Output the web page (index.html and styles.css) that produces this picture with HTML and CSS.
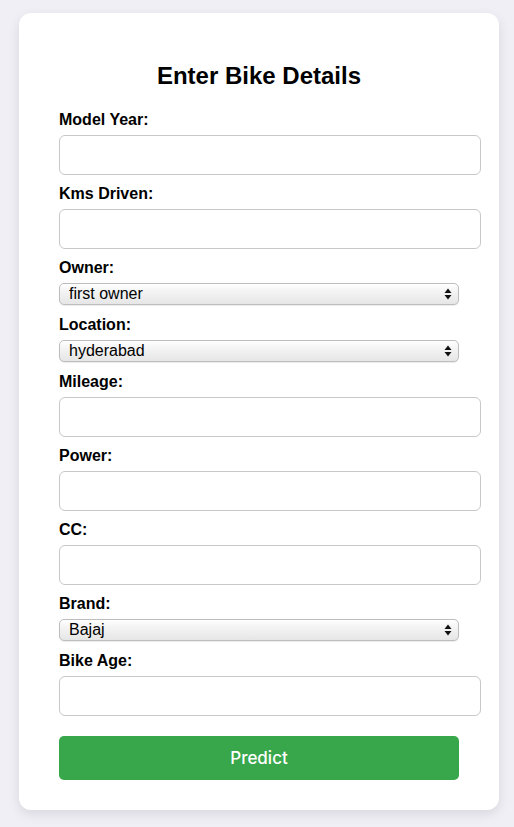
FILE: index.html
```html
<!DOCTYPE html>
<html>
<head>
<meta charset="utf-8">
<title>Bike Price Prediction</title>
<link rel="stylesheet" href="styles.css">
</head>
<body>
<div class="card">
  <h2 class="title">Enter Bike Details</h2>
  <form class="form">
    <label class="label">Model Year:</label>
    <input class="field" type="text">
    <label class="label">Kms Driven:</label>
    <input class="field" type="text">
    <label class="label">Owner:</label>
    <div class="select-wrap">
      <select class="select"><option>first owner</option></select>
      <svg class="arrows" width="8" height="12" viewBox="0 0 8 12"><path d="M4 0.5 L7.5 5 L0.5 5 Z M4 11.5 L7.5 7 L0.5 7 Z" fill="#111"/></svg>
    </div>
    <label class="label">Location:</label>
    <div class="select-wrap">
      <select class="select"><option>hyderabad</option></select>
      <svg class="arrows" width="8" height="12" viewBox="0 0 8 12"><path d="M4 0.5 L7.5 5 L0.5 5 Z M4 11.5 L7.5 7 L0.5 7 Z" fill="#111"/></svg>
    </div>
    <label class="label">Mileage:</label>
    <input class="field" type="text">
    <label class="label">Power:</label>
    <input class="field" type="text">
    <label class="label">CC:</label>
    <input class="field" type="text">
    <label class="label">Brand:</label>
    <div class="select-wrap">
      <select class="select"><option>Bajaj</option></select>
      <svg class="arrows" width="8" height="12" viewBox="0 0 8 12"><path d="M4 0.5 L7.5 5 L0.5 5 Z M4 11.5 L7.5 7 L0.5 7 Z" fill="#111"/></svg>
    </div>
    <label class="label">Bike Age:</label>
    <input class="field" type="text">
    <button class="btn" type="button">Predict</button>
  </form>
</div>
</body>
</html>
```
FILE: styles.css
```css
html, body {
  margin: 0;
  padding: 0;
}
body {
  background: #f0eff6;
  font-family: "Liberation Sans", Arial, sans-serif;
  color: #000;
  padding: 13px 15px 20px 19px;
}
.card {
  width: 400px;
  background: #fff;
  border-radius: 12px;
  box-shadow: 0 4px 12px rgba(0, 0, 0, 0.1);
  padding: 40px 40px 30px 40px;
}
.title {
  margin: 9px 0 21px;
  font-size: 24px;
  font-weight: bold;
  text-align: center;
  line-height: 28px;
}
.form {
  display: flex;
  flex-direction: column;
  align-items: flex-start;
}
.label {
  display: block;
  font-size: 16px;
  font-weight: bold;
  line-height: 18px;
  margin-bottom: 6px;
}
.field {
  box-sizing: border-box;
  width: 422px;
  height: 40px;
  padding: 10px;
  border: 1px solid #c8c8c8;
  border-radius: 6px;
  margin: 0 0 10px;
  font-size: 16px;
  background: #fff;
  outline: none;
}
.select-wrap {
  position: relative;
  width: 400px;
  height: 22px;
  margin-bottom: 11px;
}
.select {
  appearance: none;
  -webkit-appearance: none;
  box-sizing: border-box;
  width: 400px;
  height: 22px;
  margin: 0;
  padding: 0 24px 0 9px;
  border: 1px solid #bdbdbd;
  border-radius: 5px;
  background: linear-gradient(#ffffff 0%, #f4f4f4 35%, #e6e6e6 100%);
  font-family: "Liberation Sans", Arial, sans-serif;
  font-size: 16px;
  color: #000;
  line-height: 20px;
  box-shadow: 0 1px 1px rgba(0, 0, 0, 0.08);
}
.arrows {
  position: absolute;
  right: 7px;
  top: 5px;
  pointer-events: none;
}
.btn {
  margin-top: 10px;
  width: 400px;
  height: 44px;
  border: none;
  border-radius: 5px;
  background: #38a74c;
  color: #fff;
  font-family: Inter, "Noto Sans", sans-serif;
  font-size: 17px;
  font-weight: 500;
}
```
